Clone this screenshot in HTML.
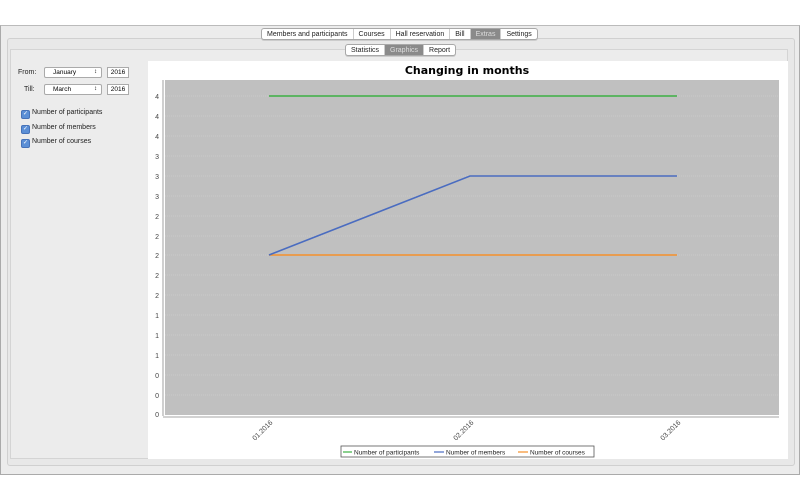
<!DOCTYPE html>
<html><head><meta charset="utf-8"><style>
body{margin:0;width:800px;height:500px;background:#fff;font-family:"Liberation Sans",sans-serif;position:relative;overflow:hidden}
.win{position:absolute;left:0;top:25px;width:798px;height:448px;background:#ececec;border:1px solid #aaa;border-top-color:#bbb}
.p1{position:absolute;left:6px;top:12px;width:786px;height:426px;border:1px solid #d0d0d0;border-radius:3px;background:#e8e8e8}
.p2{position:absolute;left:4px;top:12px;width:776px;height:408px;border:1px solid #d4d4d4;background:#ececec}
.seg{position:absolute;display:flex;border:1px solid #a8a8a8;border-radius:3px;background:#fff;font-size:7px;height:10px;box-shadow:0 1px 0 #ccc}
.seg span{padding:0 5px;border-right:1px solid #ccc;color:#222;display:flex;align-items:center;height:10px}
.seg span:last-child{border-right:0}
.seg .on{background:#8a8a8a;color:#ddd}
.lbl{position:absolute;font-size:7px;color:#222}
.sel{position:absolute;width:48px;height:9px;border:1px solid #aaa;border-radius:2px;background:#fff;font-size:6.5px;line-height:9px;padding-left:8px}
.sel:after{content:"\2195";position:absolute;right:4px;top:0;font-size:6px}
.yr{position:absolute;width:20px;height:9px;border:1px solid #aaa;background:#fff;font-size:6.5px;line-height:9px;text-align:center}
.cb{position:absolute;font-size:7px;color:#222;line-height:9px}
.cb i{display:inline-block;width:7px;height:7px;background:#5b8fd6;border:1px solid #4672b8;border-radius:2px;vertical-align:-1px;margin-right:2px;color:#fff;font-style:normal;font-size:6px;line-height:7px;text-align:center}
</style></head><body>
<div class="win">
 <div class="p1"></div>
</div>
<div style="position:absolute;left:6px;top:37px;width:786px;height:428px">
 <div class="p2"></div>
</div>
<div class="seg" style="left:261px;top:28px"><span>Members and participants</span><span>Courses</span><span>Hall reservation</span><span>Bill</span><span class="on">Extras</span><span>Settings</span></div>
<div class="seg" style="left:345px;top:44px"><span>Statistics</span><span class="on">Graphics</span><span>Report</span></div>
<div class="lbl" style="left:18px;top:69px">From:</div>
<div class="sel" style="left:44px;top:67px">January</div>
<div class="yr" style="left:107px;top:67px">2016</div>
<div class="lbl" style="left:24px;top:86px">Till:</div>
<div class="sel" style="left:44px;top:84px">March</div>
<div class="yr" style="left:107px;top:84px">2016</div>
<div class="cb" style="left:21px;top:108px"><i>✓</i>Number of participants</div>
<div class="cb" style="left:21px;top:123px"><i>✓</i>Number of members</div>
<div class="cb" style="left:21px;top:137px"><i>✓</i>Number of courses</div>
<svg style="position:absolute;left:148px;top:61px" width="640" height="398" viewBox="148 61 640 398" font-family="Liberation Sans,sans-serif">
 <rect x="148" y="61" width="640" height="398" fill="#fff"/>
 <text x="467" y="74" font-size="11" font-weight="bold" text-anchor="middle" fill="#000" font-family="DejaVu Sans,sans-serif">Changing in months</text>
 <rect x="165" y="80" width="614" height="335" fill="#c0c0c0"/>
 <g stroke="#d4d4d4" stroke-width="0.6" stroke-dasharray="1,1">
  <line x1="165" x2="779" y1="96" y2="96"/><line x1="165" x2="779" y1="116" y2="116"/><line x1="165" x2="779" y1="136" y2="136"/><line x1="165" x2="779" y1="156" y2="156"/><line x1="165" x2="779" y1="176" y2="176"/><line x1="165" x2="779" y1="196" y2="196"/><line x1="165" x2="779" y1="216" y2="216"/><line x1="165" x2="779" y1="236" y2="236"/><line x1="165" x2="779" y1="255" y2="255"/><line x1="165" x2="779" y1="275" y2="275"/><line x1="165" x2="779" y1="295" y2="295"/><line x1="165" x2="779" y1="315" y2="315"/><line x1="165" x2="779" y1="335" y2="335"/><line x1="165" x2="779" y1="355" y2="355"/><line x1="165" x2="779" y1="375" y2="375"/><line x1="165" x2="779" y1="395" y2="395"/>
 </g>
 <line x1="163" y1="80" x2="163" y2="416" stroke="#888" stroke-width="0.8"/>
 <line x1="163" y1="417" x2="779" y2="417" stroke="#888" stroke-width="0.8"/>
 <g font-size="7" fill="#444" text-anchor="end">
  <text x="159" y="99">4</text><text x="159" y="119">4</text><text x="159" y="139">4</text><text x="159" y="159">3</text><text x="159" y="179">3</text><text x="159" y="199">3</text><text x="159" y="219">2</text><text x="159" y="239">2</text><text x="159" y="258">2</text><text x="159" y="278">2</text><text x="159" y="298">2</text><text x="159" y="318">1</text><text x="159" y="338">1</text><text x="159" y="358">1</text><text x="159" y="378">0</text><text x="159" y="398">0</text><text x="159" y="417">0</text>
 </g>
 <g font-size="7" fill="#444" text-anchor="end">
  <text transform="translate(273,423) rotate(-45)">01.2016</text>
  <text transform="translate(474,423) rotate(-45)">02.2016</text>
  <text transform="translate(681,423) rotate(-45)">03.2016</text>
 </g>
 <polyline points="269,96 677,96" stroke="#3cb043" stroke-width="1.6" fill="none"/>
 <polyline points="269,255 677,255" stroke="#f5902a" stroke-width="1.6" fill="none"/>
 <polyline points="269,255 470,176 677,176" stroke="#4a6cc0" stroke-width="1.6" fill="none"/>
 <rect x="341" y="446" width="253" height="11" fill="#fff" stroke="#555" stroke-width="0.8"/>
 <g font-size="6.5" fill="#222">
  <line x1="343" x2="352" y1="452" y2="452" stroke="#3cb043" stroke-width="1.2"/><text x="354" y="454.5">Number of participants</text>
  <line x1="434" x2="444" y1="452" y2="452" stroke="#4a6cc0" stroke-width="1.2"/><text x="446" y="454.5">Number of members</text>
  <line x1="518" x2="528" y1="452" y2="452" stroke="#f5902a" stroke-width="1.2"/><text x="530" y="454.5">Number of courses</text>
 </g>
</svg>
</body></html>
